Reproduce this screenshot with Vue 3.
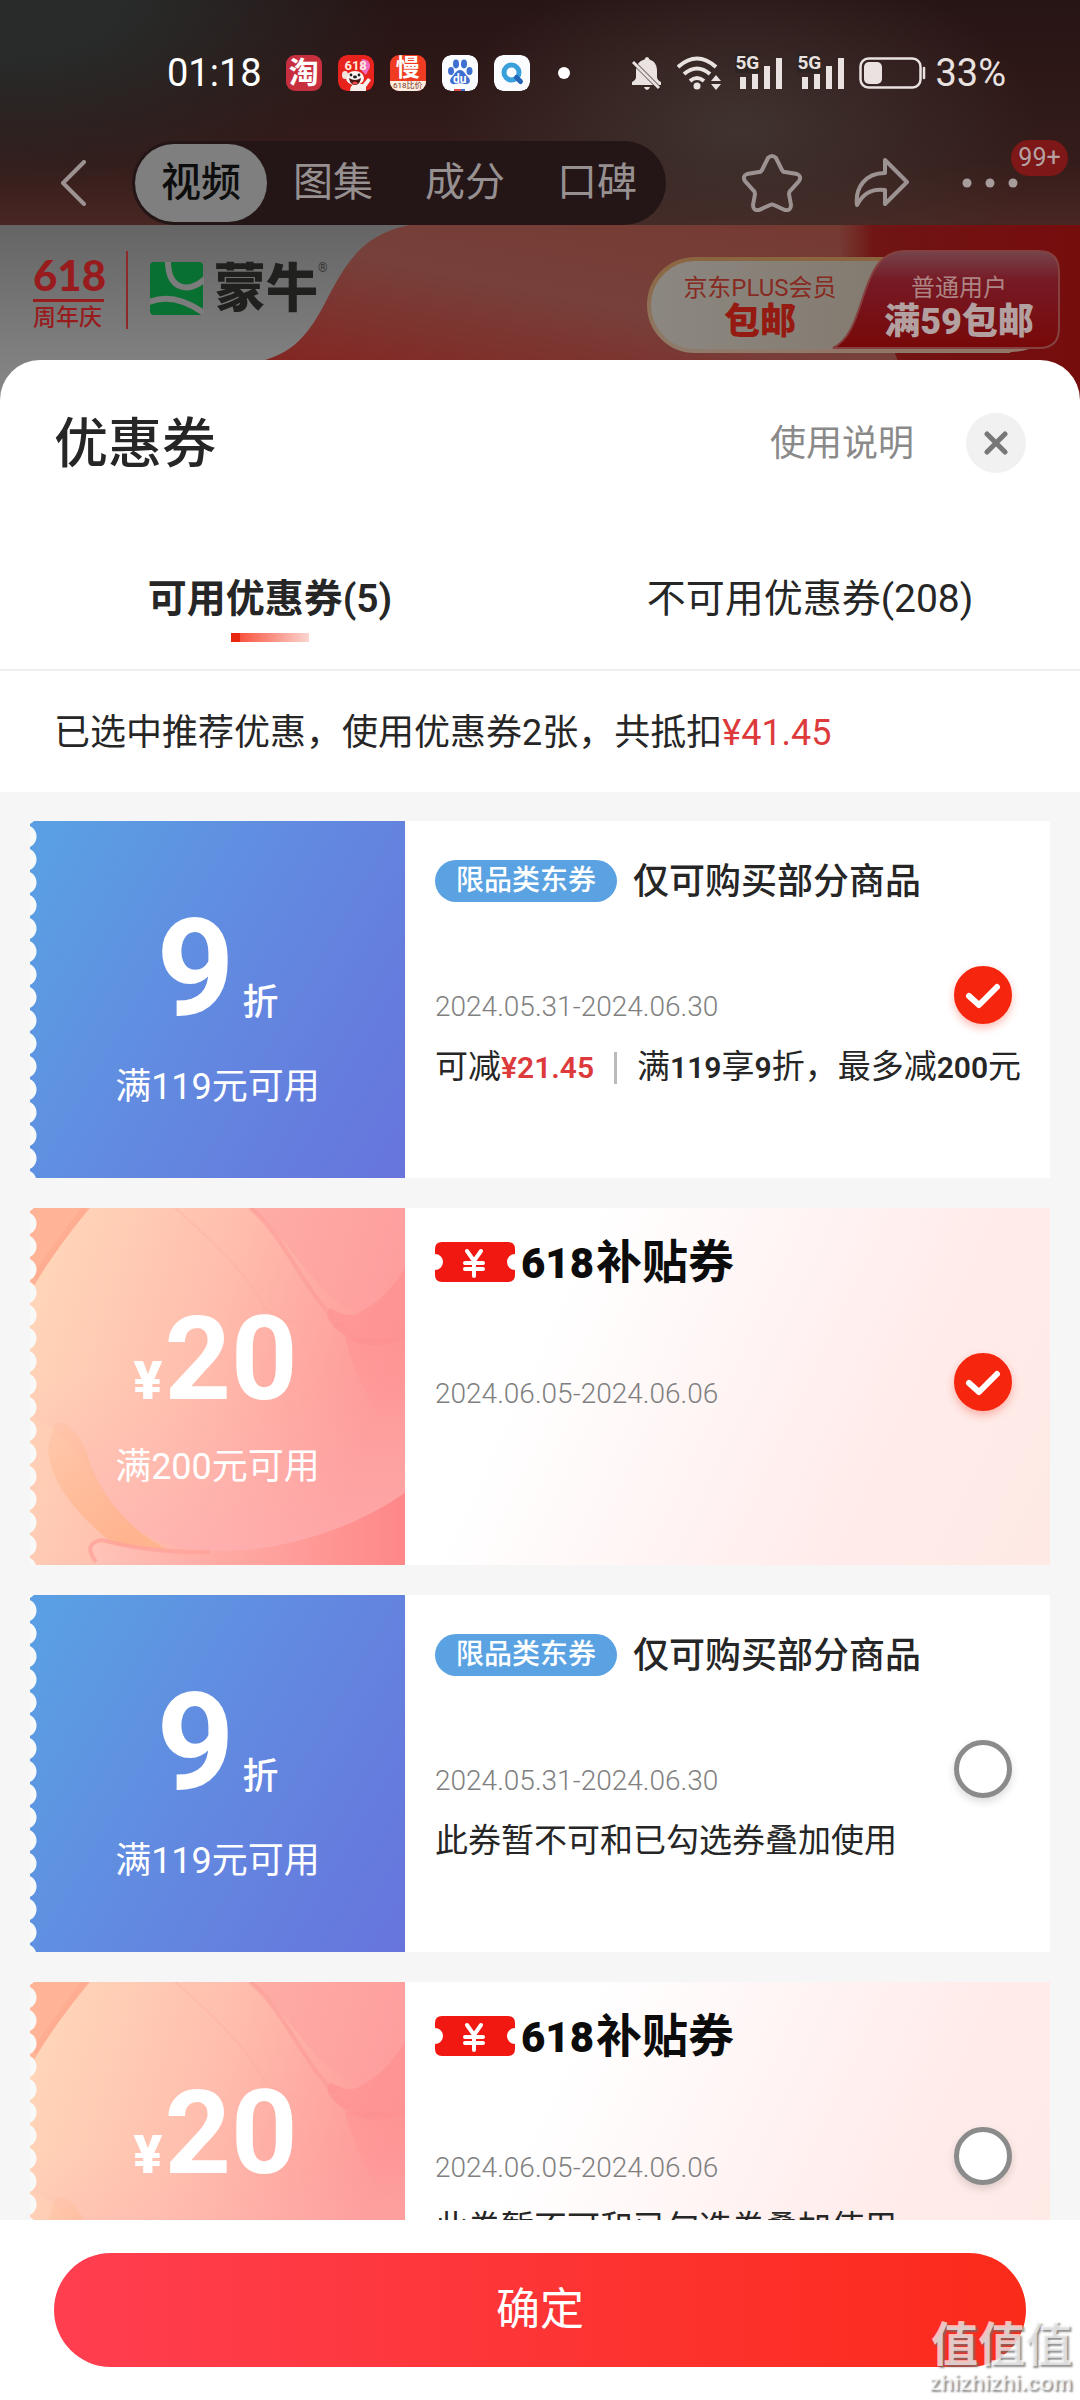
<script setup>
import { ref } from 'vue'

const sections = ['视频', '图集', '成分', '口碑']
const activeSection = ref('视频')
const activeTab = ref('usable')

const tabs = [
  { id: 'usable', label: '可用优惠券(5)' },
  { id: 'unusable', label: '不可用优惠券(208)' }
]

const coupons = ref([
  {
    id: 1, kind: 'discount', amount: '9', condition: '满119元可用',
    period: '2024.05.31-2024.06.30', offer: true, picked: true
  },
  {
    id: 2, kind: 'subsidy', amount: '20', condition: '满200元可用',
    period: '2024.06.05-2024.06.06', picked: true
  },
  {
    id: 3, kind: 'discount', amount: '9', condition: '满119元可用',
    period: '2024.05.31-2024.06.30', note: '此券暂不可和已勾选券叠加使用', picked: false
  },
  {
    id: 4, kind: 'subsidy', amount: '20', condition: '满200元可用',
    period: '2024.06.05-2024.06.06', note: '此券暂不可和已勾选券叠加使用', picked: false
  }
])
</script>

<template>
  <div class="screen">
    <div class="backdrop">
      <div class="status">
        <div class="status-left">
          <span class="clock">01:18</span>
          <span class="app app-tao">淘</span>
          <span class="app app-dog">
            <svg viewBox="0 0 36 36">
              <rect width="36" height="36" rx="9" fill="#e8231d" />
              <path d="M24 4q8 0 8 8l-4 8-6-6z" fill="#f06ac0" />
              <path d="M12 36q0-6 5-7l8 0 5-6 3 2-5 7v4z" fill="#f8efec" />
              <ellipse cx="17" cy="23" rx="9" ry="7" fill="#fbf4f1" />
              <ellipse cx="7" cy="20" rx="3" ry="4" fill="#f3e4e0" />
              <path d="M11 23q6 4 12 0-1 7-6 7t-6-7z" fill="#4a1512" />
              <path d="M14 28q3-3 6 0-3 3-6 0z" fill="#ec4a4a" />
              <circle cx="13" cy="20" r="1.4" fill="#222" /><circle cx="21" cy="20" r="1.4" fill="#222" />
              <ellipse cx="17" cy="22" rx="2" ry="1.4" fill="#222" />
            </svg>
            <b>618</b>
          </span>
          <span class="app app-man"><b>慢</b><i>618比价</i></span>
          <span class="app app-du">
            <svg viewBox="0 0 36 36">
              <rect width="36" height="36" rx="9" fill="#fbfcff" />
              <g fill="#3f6fd0">
                <ellipse cx="14" cy="9" rx="3" ry="4.4" /><ellipse cx="22" cy="9" rx="3" ry="4.4" />
                <ellipse cx="9" cy="16" rx="3" ry="4" /><ellipse cx="27.500" cy="16" rx="3" ry="4" />
                <path d="M18 15c4 0 5 4 8 7 4 4 1 8-3 7-4-1-6-1-10 0s-7-3-3-7c3-3 4-7 8-7z" />
              </g>
              <path d="M12 34h7v2h-7z" fill="#e04848" /><path d="M19 34h4v2h-4z" fill="#4468d8" />
            </svg>
            <b>du</b>
          </span>
          <span class="app">
            <svg viewBox="0 0 36 36">
              <rect width="36" height="36" rx="9" fill="#fbfcff" />
              <circle cx="17.500" cy="17.500" r="7.500" fill="none" stroke="#3aa0dc" stroke-width="5" />
              <path d="M22.500 22.500l4 4" stroke="#2465b8" stroke-width="5" stroke-linecap="round" />
            </svg>
          </span>
          <span class="dot"></span>
        </div>
        <div class="status-right">
          <svg width="32" height="36" viewBox="0 0 32 36">
            <path d="M16 2q2 0 2.500 2.500Q26 7 26 15v7q0 3 4 5v3H1v-3q4-2 4-5v-7Q5 7 13.500 4.500 14 2 16 2zM13 32h6q-1 3-3 3t-3-3z" fill="#e9e2e1" />
            <path d="M0 5l29 29" stroke="#2e2422" stroke-width="4" />
            <path d="M2 7l26 26" stroke="#e9e2e1" stroke-width="3" />
          </svg>
          <svg width="44" height="36" viewBox="0 0 44 36">
            <g fill="none" stroke="#e9e2e1" stroke-width="4">
              <path d="M1 12Q20-5 39 12" /><path d="M7 19Q20 8 33 19" /><path d="M13 26Q20 20 27 26" />
            </g>
            <circle cx="20" cy="31" r="3.500" fill="#e9e2e1" />
            <path d="M34 26l5-6 5 6zM34 29h10l-5 6z" fill="#e9e2e1" />
          </svg>
          <span v-for="n in 2" :key="n" class="signal">
            <svg width="48" height="34" viewBox="0 0 48 34">
              <path d="M5 21h6v12H5zM17 18h6v15h-6zM29 10h6v23h-6zM41 2h6v31h-6z" fill="#e9e2e1" />
            </svg>
            <b>5G</b>
          </span>
          <svg width="68" height="32" viewBox="0 0 68 32">
            <rect x="1.500" y="1.500" width="60" height="29" rx="8" fill="none" stroke="#e9e2e1" stroke-width="2.500" />
            <rect x="5" y="5" width="18" height="22" rx="5" fill="#e9e2e1" />
            <path d="M65 11v10" stroke="#e9e2e1" stroke-width="2.500" stroke-linecap="round" />
          </svg>
          <span class="battery">33%</span>
        </div>
      </div>

      <nav class="nav">
        <button class="icon-btn" aria-label="返回">
          <svg width="26" height="46" viewBox="0 0 26 46"><path d="M24 2L3 23l21 21" fill="none" stroke="#9c9291" stroke-width="4" stroke-linecap="round" stroke-linejoin="round" /></svg>
        </button>
        <div class="sections">
          <button v-for="s in sections" :key="s" :class="{ on: s === activeSection }" @click="activeSection = s">{{ s }}</button>
        </div>
        <div class="nav-tools">
          <button class="icon-btn" aria-label="收藏">
            <svg width="60" height="58" viewBox="0 0 60 58"><path d="M26 4q4-4 8 0l6 12q1 2 3 2l12 2q5 2 2 7l-9 10q-1 1-1 3l2 11q0 6-6 5l-11-5q-2-1-4 0l-11 5q-6 1-6-5l2-11q0-2-1-3L3 27q-3-5 2-7l12-2q2 0 3-2z" fill="none" stroke="#9c9291" stroke-width="4" /></svg>
          </button>
          <button class="icon-btn" aria-label="分享">
            <svg width="56" height="50" viewBox="0 0 56 50"><path d="M31 2l22 22-22 22V32C15 30 8 38 3 47 1 30 11 15 31 15z" fill="none" stroke="#9c9291" stroke-width="4" stroke-linejoin="round" /></svg>
          </button>
          <button class="icon-btn more" aria-label="更多">
            <svg width="56" height="10" viewBox="0 0 56 10" fill="#a79d9c"><circle cx="5" cy="5" r="4.500" /><circle cx="28" cy="5" r="4.500" /><circle cx="51" cy="5" r="4.500" /></svg>
            <span class="count">99+</span>
          </button>
        </div>
      </nav>

      <div class="banner">
        <svg class="banner-art" viewBox="0 0 1080 175" preserveAspectRatio="none">
          <defs>
            <linearGradient id="bgGrey" x1="0" y1="0" x2="0" y2="1"><stop offset="0" stop-color="#656565" /><stop offset="1" stop-color="#888" /></linearGradient>
            <linearGradient id="bgRed" x1="0" y1="1" x2="1" y2="0"><stop offset="0" stop-color="#861412" /><stop offset=".2" stop-color="#822a26" /><stop offset=".5" stop-color="#77403a" /><stop offset="1" stop-color="#74382f" /></linearGradient>
            <linearGradient id="bgDeep" x1="0" y1="0" x2="1" y2="0"><stop offset="0" stop-color="#701c18" stop-opacity="0" /><stop offset=".15" stop-color="#701414" /><stop offset="1" stop-color="#760d0d" /></linearGradient>
          </defs>
          <rect width="1080" height="175" fill="url(#bgGrey)" />
          <path d="M410 0C360 10 345 40 325 78 308 110 292 132 250 138L200 175H1080V0z" fill="url(#bgRed)" />
          <path d="M838 0q4 60 54 120l20 55h168V0z" fill="url(#bgDeep)" />
        </svg>
        <div class="festival">
          <strong>618</strong>
          <span>周年庆</span>
        </div>
        <div class="brand">
          <svg width="54" height="54" viewBox="0 0 54 54">
            <rect width="53" height="53" rx="4" fill="#087030" />
            <path d="M18-1c0 30 22 32 37 18" fill="none" stroke="#7c7c7c" stroke-width="6" />
            <path d="M-1 40Q24 30 54 51" fill="none" stroke="#7c7c7c" stroke-width="6" />
          </svg>
          <b>蒙牛</b><sup>®</sup>
        </div>
        <div class="shipping">
          <svg viewBox="0 0 414 106" preserveAspectRatio="none">
            <defs>
              <linearGradient id="plus" x1="0" y1="0" x2="1" y2="0"><stop offset="0" stop-color="#8b8781" /><stop offset="1" stop-color="#807466" /></linearGradient>
              <linearGradient id="rim" x1="0" y1="0" x2="0" y2="1"><stop offset="0" stop-color="#8b6540" /><stop offset="1" stop-color="#8f7b6b" /></linearGradient>
              <linearGradient id="usr" x1="0" y1="0" x2="0" y2="1"><stop offset="0" stop-color="#75454d" /><stop offset=".3" stop-color="#761a25" /><stop offset="1" stop-color="#780808" /></linearGradient>
            </defs>
            <path d="M48 11H300l60 92H48a46 46 0 0 1 0-92z" fill="url(#plus)" stroke="url(#rim)" stroke-width="4" />
            <path d="M186 100C222 82 210 3 258 3H392Q412 3 412 24V80Q412 100 392 100z" fill="url(#usr)" stroke="#84413f" stroke-width="2" />
            <path d="M186 101H382q-8 3-18 3H150z" fill="#937568" />
          </svg>
          <div class="plus"><span>京东PLUS会员</span><b>包邮</b></div>
          <div class="normal"><span>普通用户</span><b>满59包邮</b></div>
        </div>
      </div>
    </div>

    <section class="sheet">
      <header class="sheet-head">
        <h1>优惠券</h1>
        <a href="#help">使用说明</a>
        <button class="close" aria-label="关闭">
          <svg width="24" height="24" viewBox="0 0 24 24"><path d="M3 3l18 18M21 3L3 21" stroke="#777" stroke-width="5" stroke-linecap="round" /></svg>
        </button>
      </header>

      <div class="tabs">
        <button v-for="t in tabs" :key="t.id" :class="{ on: t.id === activeTab }" @click="activeTab = t.id">{{ t.label }}</button>
      </div>

      <p class="summary">已选中推荐优惠，使用优惠券2张，共抵扣<em>¥41.45</em></p>

      <div class="list">
        <article v-for="c in coupons" :key="c.id" class="coupon" :class="c.kind">
          <div class="face">
            <svg v-if="c.kind === 'subsidy'" class="face-art" viewBox="0 0 375 357" preserveAspectRatio="none">
              <defs>
                <linearGradient :id="'base' + c.id" x1="0" y1="0" x2="1" y2=".3"><stop offset="0" stop-color="#ffd9ba" /><stop offset=".5" stop-color="#ffbfae" /><stop offset="1" stop-color="#fe9999" /></linearGradient>
                <linearGradient :id="'fade' + c.id" x1="0" y1="0" x2=".5" y2="1"><stop offset="0" stop-color="#ffb98f" stop-opacity=".2" /><stop offset="1" stop-color="#ffb48e" /></linearGradient>
                <linearGradient :id="'foot' + c.id" x1="0" y1="0" x2="1" y2="0"><stop offset="0" stop-color="#ffc4b8" /><stop offset="1" stop-color="#fe8788" /></linearGradient>
                <linearGradient :id="'deep' + c.id" x1="0" y1="0" x2="0" y2="1"><stop offset="0" stop-color="#fe8f90" /><stop offset="1" stop-color="#fe9696" stop-opacity="0" /></linearGradient>
                <linearGradient :id="'glow' + c.id" x1="0" y1="0" x2="0" y2="1"><stop offset="0" stop-color="#ffb7b2" stop-opacity="0" /><stop offset="1" stop-color="#ffb0b4" stop-opacity=".85" /></linearGradient>
              </defs>
              <rect width="375" height="357" :fill="`url(#base${c.id})`" />
              <path d="M0 0H60Q26 40 4 78H0z" fill="#ffb497" />
              <path d="M55 0Q30 32 4 70" fill="none" stroke="#ffa990" stroke-width="6" opacity=".6" />
              <path d="M220 0C265 35 288 95 330 103 350 106 362 80 375 62V0z" fill="#fda0a1" opacity=".55" />
              <path d="M330 104Q355 92 375 60V130Q345 145 318 130 290 112 300 100 320 112 330 104z" fill="#fe8f90" opacity=".6" />
              <path d="M220 0C252 25 270 75 305 112Q335 145 375 128" fill="none" stroke="#fc9593" stroke-width="4" opacity=".5" />
              <path d="M145 0Q215 60 235 100 265 125 310 112" fill="none" stroke="#fda89e" stroke-width="2" opacity=".3" />
              <path d="M315 130H375V240Q330 190 315 130z" :fill="`url(#deep${c.id})`" opacity=".5" />
              <path d="M0 170H375V285Q290 343 190 343 110 343 75 290 45 225 0 210z" :fill="`url(#glow${c.id})`" opacity=".7" />
              <path d="M25 215Q42 212 55 240 75 310 140 343 110 345 82 335 20 285 18 240z" :fill="`url(#fade${c.id})`" />
              <path d="M62 335Q150 346 220 342 310 330 375 285V357H66Q56 343 62 335z" :fill="`url(#foot${c.id})`" />
              <path d="M66 354Q52 335 72 332 120 345 180 344" fill="none" stroke="#ffa39b" stroke-width="4" opacity=".8" />
            </svg>
            <div class="amount">
              <template v-if="c.kind === 'discount'"><strong>{{ c.amount }}</strong><span>折</span></template>
              <template v-else><i>¥</i><strong>{{ c.amount }}</strong></template>
            </div>
            <div class="condition">{{ c.condition }}</div>
          </div>
          <div class="info">
            <div v-if="c.kind === 'discount'" class="title">
              <span class="tag">限品类东券</span><h2>仅可购买部分商品</h2>
            </div>
            <div v-else class="title subsidy-title">
              <span class="ticket">
                <svg viewBox="0 0 80 40" width="80" height="40">
                  <path d="M7 0H73Q80 0 80 7V12a8 8 0 0 0 0 16V33Q80 40 73 40H7Q0 40 0 33V28a8 8 0 0 0 0-16V7Q0 0 7 0z" fill="#f01810" />
                  <path d="M32 9l7 10 7-10M39 19v15M30 21h18M30 27h18" fill="none" stroke="#fff" stroke-width="4" stroke-linecap="round" />
                </svg>
              </span>
              <h2><b>618</b>补贴券</h2>
            </div>
            <time>{{ c.period }}</time>
            <p v-if="c.offer" class="detail">
              <span>可减<em>¥21.45</em></span><span class="bar"></span>
              <span>满<b>119</b>享<b>9</b>折，最多减<b>200</b>元</span>
            </p>
            <p v-else-if="c.note" class="detail">{{ c.note }}</p>
            <label class="pick">
              <input type="checkbox" v-model="c.picked" :aria-label="c.condition">
              <svg v-if="c.picked" viewBox="0 0 58 58"><path d="M15 30l10 9 18-18" fill="none" stroke="#fff" stroke-width="6" stroke-linecap="round" stroke-linejoin="round" /></svg>
            </label>
          </div>
        </article>
      </div>

      <footer class="footer"><button>确定</button></footer>
    </section>

    <div class="stamp"><b>值值值</b><span>zhizhizhi.com</span></div>
  </div>
</template>

<style>
body { background: #fff; }
</style>

<style scoped>
.screen {
  position: relative;
  display: flex;
  flex-direction: column;
  height: 100vh;
  overflow: hidden;
  font-family: Roboto, "Noto Sans CJK SC", sans-serif;
  color: #262626;
}
.screen * { box-sizing: border-box; }
button { border: 0; padding: 0; margin: 0; background: none; font: inherit; color: inherit; }
h1, h2, p { margin: 0; }
em, i { font-style: normal; }
svg { display: block; flex: none; }

.backdrop {
  background:
    radial-gradient(ellipse 400px 190px at 0 0, #282b2a 30%, rgba(38, 43, 41, 0) 100%),
    radial-gradient(ellipse 300px 170px at 740px 130px, #40332f 0, rgba(60, 48, 45, 0) 100%),
    linear-gradient(180deg, #271414 0, #341c1a 45%, #482723 225px);
}
.status {
  display: flex;
  justify-content: space-between;
  align-items: center;
  height: 140px;
  padding: 6px 74px 0 167px;
  color: #fff;
}
.status-left, .status-right { display: flex; align-items: center; gap: 16px; }
.clock { font-size: 38px; line-height: 44px; margin-right: 8px; }
.app { position: relative; width: 36px; height: 36px; border-radius: 9px; overflow: hidden; text-align: center; }
.app-tao { background: #c72f3e; font-size: 30px; line-height: 36px; font-weight: 700; }
.app-dog b { position: absolute; top: 4px; left: 0; width: 36px; font-size: 13px; line-height: 13px; color: #ffe9d8; }
.app-man { display: flex; flex-direction: column; background: #ee3b22; }
.app-man b { font-size: 24px; line-height: 26px; }
.app-man i { font-size: 8px; line-height: 10px; background: #fdeee2; color: #7a3324; }
.app-du b { position: absolute; top: 18px; left: 0; width: 36px; font-size: 12px; line-height: 12px; }
.dot { width: 12px; height: 12px; border-radius: 6px; background: #fff; margin-left: 12px; }
.status-right { color: #e9e2e1; gap: 14px; }
.signal { position: relative; }
.signal b { position: absolute; top: -3px; left: 0; font-size: 19px; line-height: 20px; font-weight: 700; background: #2e2422; }
.battery { font-size: 38px; line-height: 44px; margin-left: -6px; }

.nav { display: flex; align-items: center; height: 85px; padding: 0 60px; }
.icon-btn { display: flex; }
.sections {
  display: flex;
  width: 534px;
  height: 84px;
  margin-left: 46px;
  padding: 3px;
  border-radius: 42px;
  background: #241617;
}
.sections button { flex: 1; border-radius: 40px; font-size: 40px; line-height: 78px; color: #979091; }
.sections .on { background: #7f7f7f; color: #0d0d0d; font-weight: 500; }
.nav-tools { display: flex; align-items: center; gap: 52px; margin-left: auto; padding-right: 2px; }
.more { position: relative; }
.count {
  position: absolute;
  left: 49px;
  bottom: 12px;
  width: 57px;
  height: 36px;
  border-radius: 18px;
  background: #7d1718;
  color: #b5a3a3;
  font-size: 25px;
  line-height: 36px;
}

.banner { position: relative; display: flex; height: 135px; padding: 0 19px 0 33px; }
.banner-art { position: absolute; left: 0; top: 0; width: 100%; height: 175px; }
.festival {
  position: relative;
  display: flex;
  flex-direction: column;
  width: 95px;
  height: 78px;
  margin-top: 26px;
  border-right: 2px solid #8b2a2a;
  color: #981c1e;
}
.festival strong { width: 71px; font: 900 42px/48px Lato, sans-serif; border-bottom: 3px solid #981c1e; text-align: center; white-space: nowrap; }
.festival span { font-size: 23px; line-height: 32px; font-weight: 500; }
.brand { position: relative; display: flex; align-items: flex-start; padding: 37px 0 0 22px; }
.brand b { font-size: 52px; line-height: 56px; font-weight: 900; margin-left: 10px; color: #20211f; }
.brand sup { font-size: 12px; line-height: 12px; color: #333; }
.shipping { position: relative; display: flex; width: 414px; height: 106px; margin: 23px 0 0 auto; text-align: center; }
.shipping svg { position: absolute; inset: 0; width: 100%; height: 100%; }
.plus, .normal { position: relative; display: flex; flex-direction: column; padding-top: 24px; }
.plus { width: 226px; color: #872b22; }
.normal { width: 172px; color: #ad8584; }
.plus span, .normal span { font-size: 24px; line-height: 32px; }
.plus b, .normal b { font-size: 36px; line-height: 36px; font-weight: 900; }
.plus b { color: #941a12; }
.normal b { color: #b3a0a0; }

.sheet {
  position: relative;
  display: flex;
  flex-direction: column;
  flex: 1;
  min-height: 0;
  background: #fff;
  border-radius: 40px 40px 0 0;
}
.sheet::before {
  content: "";
  position: absolute;
  inset: 0 0 auto;
  height: 40px;
  z-index: -1;
  background: linear-gradient(90deg, #888 50%, #760d0d 50%);
}
.sheet-head { display: flex; align-items: center; height: 166px; padding: 0 54px; }
h1 { padding-top: 4px; font-size: 54px; line-height: 64px; font-weight: 500; margin-right: auto; }
.sheet-head a { padding-top: 2px; font-size: 36px; line-height: 44px; color: #8a8a8a; text-decoration: none; }
.close { display: flex; align-items: center; justify-content: center; width: 60px; height: 60px; border-radius: 30px; background: #f1f1f1; margin-left: 52px; }
.tabs { display: flex; height: 145px; border-bottom: 2px solid #efefef; }
.tabs button { position: relative; flex: 1; padding-top: 2px; font-size: 39px; line-height: 48px; }
.tabs .on { font-weight: 600; }
.tabs .on::after {
  content: "";
  position: absolute;
  left: 50%;
  bottom: 27px;
  width: 78px;
  height: 9px;
  margin-left: -39px;
  background: linear-gradient(90deg, #e8260f 9px, #f9543f 9px, #fbd5d0);
}
.summary { padding: 38px 54px 35px; font-size: 36px; line-height: 48px; white-space: nowrap; }
.summary em { color: #dd3a3c; }

.list {
  flex: 1;
  min-height: 0;
  overflow: auto;
  scrollbar-width: none;
  display: flex;
  flex-direction: column;
  gap: 30px;
  padding: 29px 30px 30px;
  background: #f6f6f6;
}
.coupon { display: flex; flex: none; height: 357px; background: #fff; }
.subsidy { background: linear-gradient(115deg, #fff 48%, #ffeceb 80%, #fee9e4); }
.face { position: relative; width: 375px; flex: none; color: #fff; text-align: center; }
.face::before {
  content: "";
  position: absolute;
  z-index: 1;
  left: 0;
  top: 0;
  width: 7px;
  height: 100%;
  background: radial-gradient(circle at -5px 50%, #f8f9f9 11px, rgba(248, 249, 249, 0) 12px) 0 4px / 7px 23px repeat-y;
}
.discount .face { background: linear-gradient(120deg, #5a9fe3 5%, #6289e0 50%, #6774dc); }
.face-art { position: absolute; inset: 0; width: 100%; height: 100%; }
.amount { position: relative; display: flex; align-items: baseline; justify-content: center; }
.amount strong { font-weight: 700; line-height: 140px; }
.amount span, .amount i { line-height: 44px; }
.discount .amount { padding-top: 78px; }
.discount strong { font-size: 136px; }
.discount .amount span { font-size: 36px; font-weight: 500; margin-left: 8px; }
.subsidy .amount { padding-top: 81px; padding-right: 4px; }
.subsidy strong { font-size: 116px; }
.subsidy i { font-size: 54px; font-weight: 900; margin-right: 2px; }
.condition { position: relative; margin-top: 26px; font-size: 36px; line-height: 44px; }
.subsidy .condition { margin-top: 16px; }

.info { position: relative; flex: 1; padding: 38px 0 0 30px; }
.title { display: flex; align-items: center; gap: 16px; height: 44px; white-space: nowrap; }
.title h2 { font-size: 36px; line-height: 44px; font-weight: 500; padding-top: 2px; }
.tag { width: 182px; height: 42px; border-radius: 21px; background: #5aa2e2; color: #fff; font-size: 28px; line-height: 42px; font-weight: 500; text-align: center; }
.subsidy-title { height: 44px; margin-top: -6px; gap: 6px; }
.subsidy-title h2 { font-size: 46px; font-weight: 700; color: #0c0c0c; }
.subsidy-title b { font-size: 42px; font-weight: 900; margin-right: 2px; }
time { display: block; margin-top: 86px; font-size: 28px; line-height: 36px; font-weight: 300; color: #808080; }
.subsidy time { margin-top: 92px; }
.detail { display: flex; align-items: center; margin-top: 20px; font-size: 33px; line-height: 44px; white-space: nowrap; }
.detail em, .detail b { font-size: 30px; font-weight: 600; }
.detail em { color: #dd3a3c; }
.bar { width: 3px; height: 32px; margin: 0 20px; background: #bbb; }
.pick { position: absolute; right: 38px; top: 145px; width: 58px; height: 58px; }
.pick input {
  appearance: none;
  display: block;
  width: 58px;
  height: 58px;
  margin: 0;
  border: 5px solid #8b8b8b;
  border-radius: 50%;
  background: #fff;
  box-shadow: 0 4px 8px rgba(0, 0, 0, 0.14);
}
.pick input:checked { border-color: #f6260e; background: #f6260e; box-shadow: 0 4px 8px rgba(246, 38, 14, 0.3); }
.pick svg { position: absolute; inset: 0; pointer-events: none; }

.footer { padding: 33px 54px; background: #fff; }
.footer button { display: block; width: 100%; height: 114px; border-radius: 57px; background: linear-gradient(90deg, #ff3e50, #fb2b1a); color: #fff; font-size: 44px; line-height: 114px; }

.stamp { position: absolute; right: 8px; bottom: 4px; display: flex; flex-direction: column; align-items: flex-end; color: rgba(255, 255, 255, 0.7); text-shadow: 2px 2px 2px rgba(110, 110, 110, 0.75); }
.stamp b { font-size: 47px; line-height: 50px; font-weight: 700; }
.stamp span { font: 700 22px/26px "Liberation Sans", sans-serif; }
</style>
